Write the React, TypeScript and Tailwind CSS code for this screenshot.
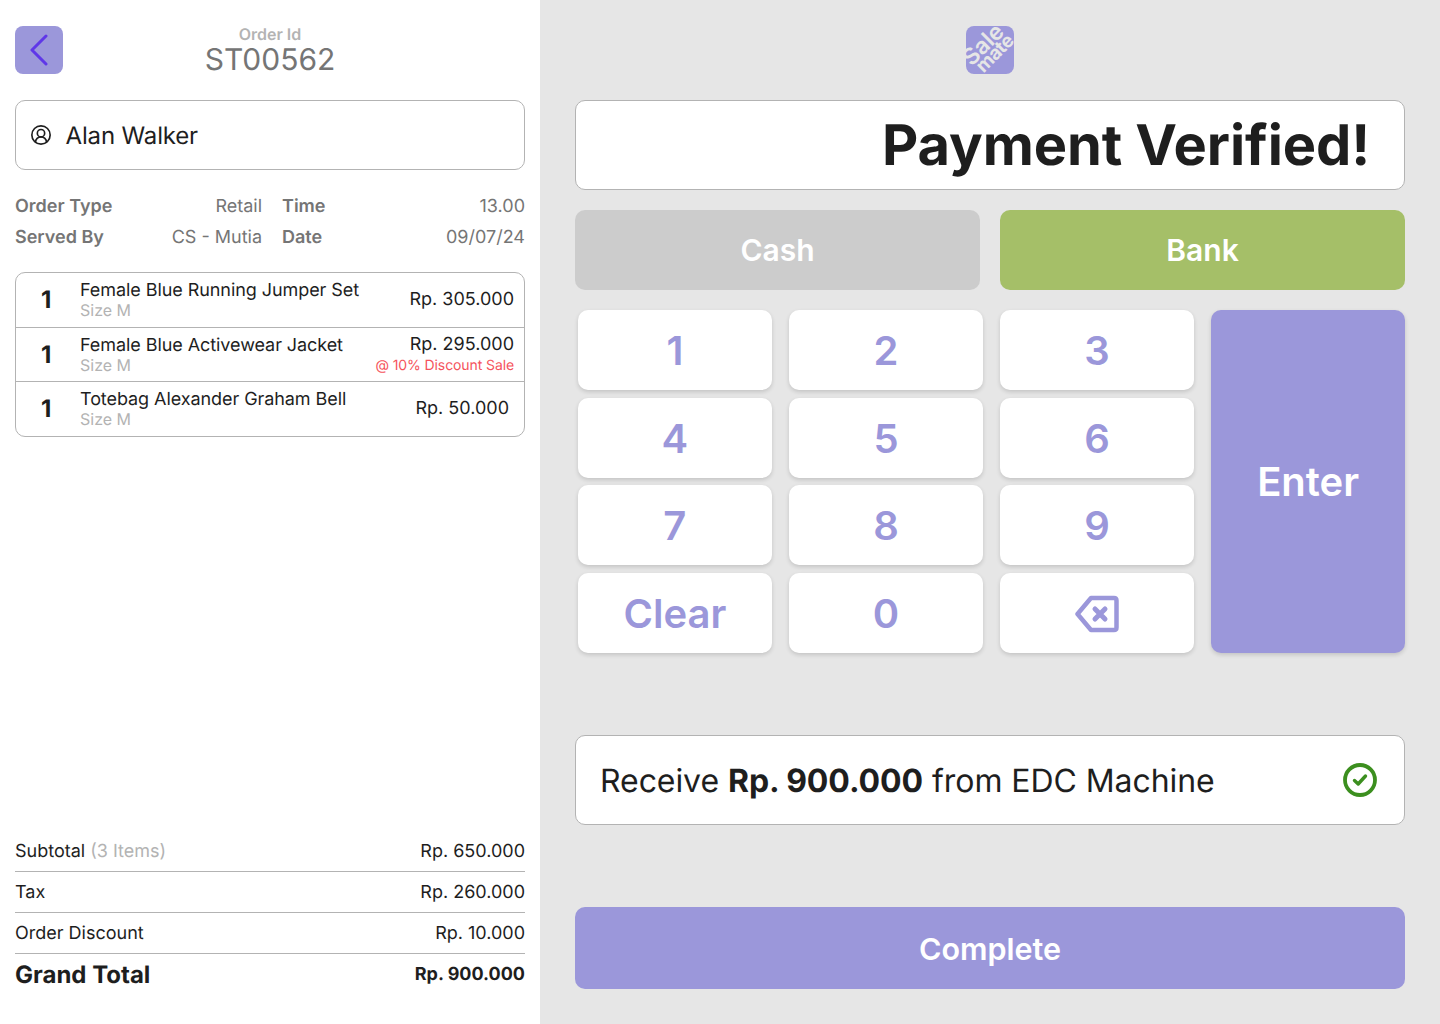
import React from "react";
import { CircleUserRound } from "lucide-react";

const items = [
  { name: "Female Blue Running Jumper Set", price: "Rp. 305.000" },
  { name: "Female Blue Activewear Jacket", price: "Rp. 295.000", note: "@ 10% Discount Sale" },
  { name: "Totebag Alexander Graham Bell", price: "Rp. 50.000", inset: true },
];

const keys = ["1", "2", "3", "4", "5", "6", "7", "8", "9", "Clear", "0", "back"];

function BackspaceIcon() {
  return (
    <svg width="44" height="38" viewBox="0 0 44 38" fill="none" stroke="#9b97da" strokeWidth="4.500" strokeLinejoin="round" strokeLinecap="round">
      <path d="M16 3H39C40.500 3 41.500 4 41.500 5.500V32.500C41.500 34 40.500 35 39 35H16L2.500 19Z" />
      <path d="M20 14L30 24M30 14L20 24" strokeWidth="5" />
    </svg>
  );
}

function VerifiedIcon() {
  return (
    <svg width="34" height="34" viewBox="0 0 34 34" fill="none" stroke="#3c8f1f">
      <circle cx="17" cy="17" r="15" strokeWidth="3.800" />
      <path d="M11.500 17.500L15.200 21L22.500 13" strokeWidth="3.400" strokeLinecap="round" strokeLinejoin="round" />
    </svg>
  );
}

function BackChevron() {
  return (
    <svg width="18" height="32" viewBox="0 0 18 32" fill="none" stroke="#5f37e8" strokeWidth="3" strokeLinecap="round" strokeLinejoin="round">
      <path d="M16 2L2 16L16 30" />
    </svg>
  );
}

function Logo() {
  return (
    <div className="w-12 h-12 rounded-lg bg-[#9b97da] overflow-hidden">
      <svg width="48" height="48" viewBox="0 0 48 48">
        <g transform="rotate(-45 24 24)" fill="#e6e6e6" fontFamily="Inter, sans-serif" fontWeight="600" textAnchor="middle">
          <text x="23" y="23" fontSize="23">Sale</text>
          <text x="25" y="36" fontSize="19" fontWeight="700" letterSpacing="-0.5">mate</text>
        </g>
      </svg>
    </div>
  );
}

export default function App() {
  return (
    <div className="flex h-[1024px] w-[1440px] overflow-hidden bg-white font-['Inter',sans-serif] text-[#1e1e1e] [text-rendering:geometricPrecision]">
      {/* order summary */}
      <div className="flex w-[540px] shrink-0 flex-col px-[15px] pt-[26px] pb-[29px]">
        <div className="relative flex h-12 items-center justify-center">
          <button className="absolute left-0 top-0 flex h-12 w-12 items-center justify-center rounded-lg bg-[#9b97da]">
            <BackChevron />
          </button>
          <div className="flex flex-col items-center pt-[2px]">
            <span className="text-base leading-[19px] font-semibold text-[#b3b3b3]">Order Id</span>
            <span className="text-[30px] leading-[33px] text-[#757575]">ST00562</span>
          </div>
        </div>

        <div className="mt-[26px] flex h-[70px] items-center gap-[14px] rounded-[10px] border border-[#b3b3b3] pl-[13.500px]">
          <CircleUserRound className="h-[22px] w-[22px]" strokeWidth={1.8} />
          <span className="pt-[2px] text-2xl tracking-[-0.15px]">Alan Walker</span>
        </div>

        <div className="mt-[25px] grid grid-cols-[247px_1fr] gap-x-5 gap-y-[9px] text-lg leading-[22px] text-[#757575]">
          <div className="flex justify-between pt-[1px]"><b className="font-semibold">Order Type</b><span>Retail</span></div>
          <div className="flex justify-between pt-[1px]"><b className="font-semibold">Time</b><span>13.00</span></div>
          <div className="flex justify-between"><b className="font-semibold">Served By</b><span>CS - Mutia</span></div>
          <div className="flex justify-between"><b className="font-semibold">Date</b><span>09/07/24</span></div>
        </div>

        <div className="mt-[23px] flex h-[165px] flex-col divide-y divide-[#b3b3b3] rounded-[10px] border border-[#b3b3b3]">
          {items.map((item) => (
            <div key={item.name} className="flex flex-1 items-center pr-[10px]">
              <span className="w-16 pl-[25px] text-2xl font-bold">1</span>
              <div className="flex flex-1 flex-col">
                <span className="text-lg leading-[20px] tracking-[-0.07px]">{item.name}</span>
                <span className="text-base leading-[18px] text-[#b3b3b3]">Size M</span>
              </div>
              <div className={item.inset ? "flex flex-col items-end pr-[5px]" : "flex flex-col items-end"}>
                <span className="text-lg leading-[22px]">{item.price}</span>
                {item.note && <span className="mt-[1px] text-sm leading-[18px] tracking-[-0.1px] text-[#f5535c]">{item.note}</span>}
              </div>
            </div>
          ))}
        </div>

        <div className="mt-auto flex flex-col text-lg">
          <div className="flex h-[40px] items-center justify-between border-b border-[#b3b3b3] pt-[1px]">
            <span>Subtotal <span className="text-[#b3b3b3]">(3 Items)</span></span>
            <span>Rp. 650.000</span>
          </div>
          <div className="flex h-[41px] items-center justify-between border-b border-[#b3b3b3] pt-[2px]">
            <span>Tax</span>
            <span>Rp. 260.000</span>
          </div>
          <div className="flex h-[41px] items-center justify-between border-b border-[#b3b3b3] pt-[2px]">
            <span>Order Discount</span>
            <span>Rp. 10.000</span>
          </div>
          <div className="flex h-[41px] items-center justify-between">
            <span className="text-2xl font-bold">Grand Total</span>
            <span className="pt-[1px] text-lg font-bold">Rp. 900.000</span>
          </div>
        </div>
      </div>

      {/* payment */}
      <div className="flex flex-1 flex-col bg-[#e6e6e6] px-[35px] pt-[26px] pb-[35px]">
        <div className="flex justify-center"><Logo /></div>

        <div className="mt-[26px] flex h-[90px] items-center justify-end rounded-[10px] border border-[#b3b3b3] bg-white pr-[34px]">
          <span className="text-[56px] font-bold tracking-[-0.1px]">Payment Verified!</span>
        </div>

        <div className="mt-5 grid grid-cols-2 gap-5">
          <button className="h-20 rounded-[10px] bg-[#cccccc] pt-[1px] text-[30px] font-semibold text-white">Cash</button>
          <button className="h-20 rounded-[10px] bg-[#a5bf68] pt-[1px] text-[30px] font-semibold text-white">Bank</button>
        </div>

        <div className="mt-5 ml-[3px] grid h-[343px] grid-cols-4 grid-rows-4 gap-x-[17.330px] gap-y-[7.670px]">
          {keys.map((key, i) => (
            <button
              key={key}
              style={{ gridColumn: (i % 3) + 1, gridRow: Math.floor(i / 3) + 1 }}
              className="flex items-center justify-center rounded-[10px] bg-white pt-[2px] text-[40px] font-semibold text-[#9b97da] shadow-[0_2px_4px_rgba(0,0,0,0.15)]"
            >
              {key === "back" ? <BackspaceIcon /> : key}
            </button>
          ))}
          <button className="col-start-4 row-span-4 row-start-1 rounded-[10px] bg-[#9b97da] text-[40px] font-semibold text-white shadow-[0_2px_4px_rgba(0,0,0,0.15)]">
            Enter
          </button>
        </div>

        <div className="mt-[82px] flex h-[90px] items-center justify-between rounded-[10px] border border-[#b3b3b3] bg-white pl-[24px] pr-[27px]">
          <span className="pt-[2px] text-[32px] tracking-[-0.07px]">Receive <b className="font-bold">Rp. 900.000</b> from EDC Machine</span>
          <VerifiedIcon />
        </div>

        <button className="mt-auto h-[82px] rounded-[10px] bg-[#9b97da] pt-[2px] text-[30.500px] font-semibold text-white">Complete</button>
      </div>
    </div>
  );
}
